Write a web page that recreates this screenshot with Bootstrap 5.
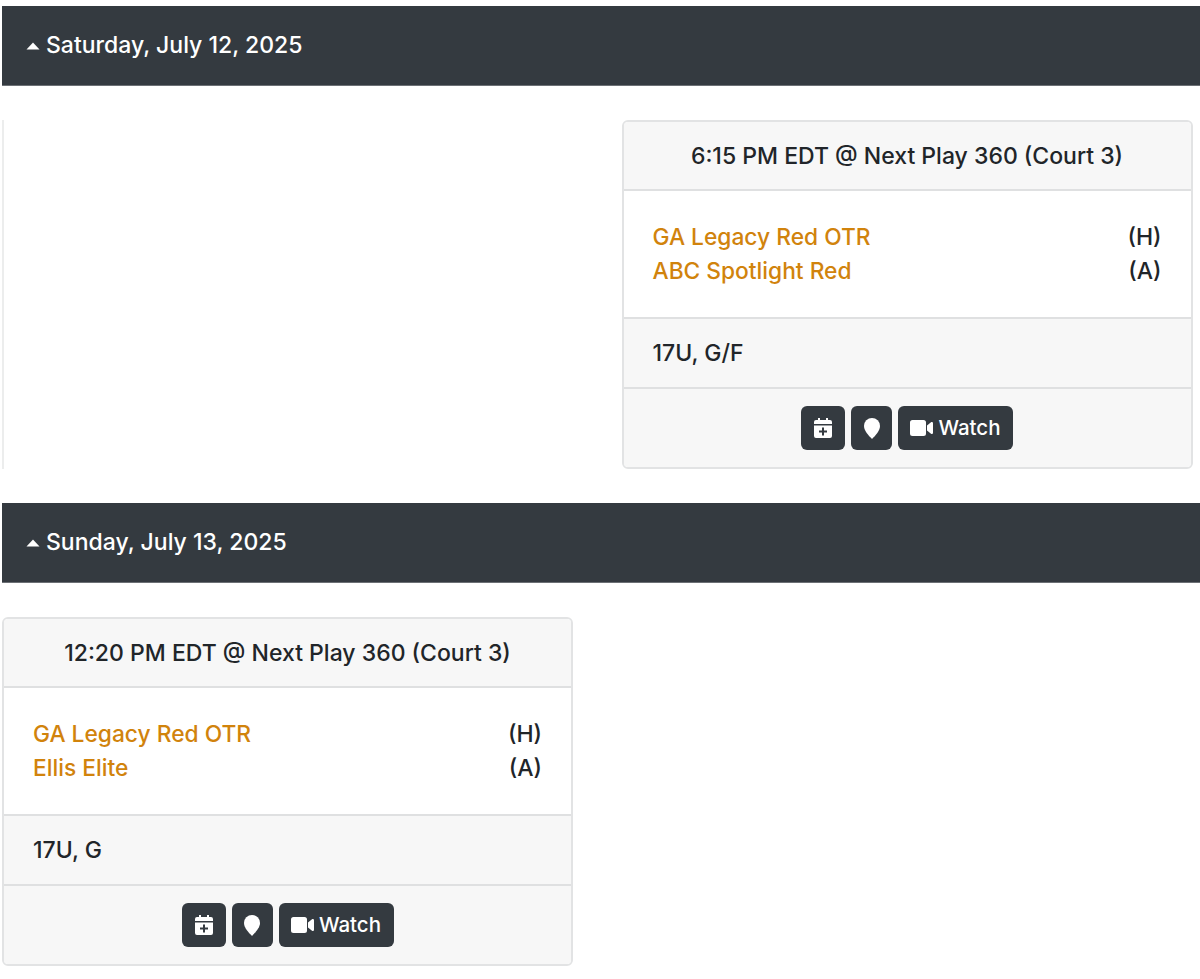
<!DOCTYPE html>
<html lang="en">
<head>
<meta charset="utf-8">
<title>Schedule</title>
<link href="https://cdn.jsdelivr.net/npm/bootstrap@5.3.0/dist/css/bootstrap.min.css" rel="stylesheet">
<style>
html,body{height:979px;overflow:hidden}
body{font-family:Inter,"Liberation Sans",sans-serif;font-size:23px;color:#212529;background:#fff;padding:6px 0 0 2px}
.day-bar{background:#343a40;color:#fff;height:79.5px;padding:0.5px 0 0 24px;font-size:23px;font-weight:500;border-bottom:1px solid #6c7075}
.day-bar svg{width:14px;height:8px;margin-right:6px;fill:#fff}
.day-grid{display:grid;grid-template-columns:571px 571px;column-gap:48.5px;padding:34.75px 0 33.75px 0}
.empty-cell{border-left:2px solid #eceded}
.game-card{border:2px solid #e2e3e4;border-radius:6px;font-size:23px;height:349px;background:#fff;overflow:hidden}
.game-head,.game-meta,.game-actions{background:#f7f7f7}
.game-head{height:69px;text-align:center;font-weight:500;border-bottom:2px solid #dfe0e1}
.game-body{height:128px;padding:0 29px;border-bottom:2px solid #dfe0e1}
.game-body a{color:#d1830c;text-decoration:none;font-weight:500;font-size:22.75px}
.game-line{height:34px;font-weight:500}
.game-meta{height:70px;padding:0 29px;font-weight:500;border-bottom:2px solid #dfe0e1}
.game-actions{flex:1;gap:6px}
.act-btn{background:#343a40;color:#fff;height:44px;border:0;border-radius:6px;font-size:20.5px;font-weight:500;padding:0;gap:5px}
.act-btn:hover{background:#343a40;color:#fff}
.act-cal{width:44px}.act-pin{width:41px}.act-watch{width:115px}
</style>
</head>
<body>
<div class="day-bar d-flex align-items-center"><svg viewBox="0 0 14 8"><path d="M7 0.5 13.5 7.5H0.5Z"/></svg>Saturday, July 12, 2025</div>
<div class="day-grid">
  <div class="empty-cell"></div>
  <div class="game-card d-flex flex-column">
    <div class="game-head d-flex align-items-center justify-content-center">6:15 PM EDT @ Next Play 360 (Court 3)</div>
    <div class="game-body d-flex flex-column justify-content-center">
      <div class="game-line d-flex justify-content-between align-items-center"><a href="#">GA Legacy Red OTR</a><span>(H)</span></div>
      <div class="game-line d-flex justify-content-between align-items-center"><a href="#">ABC Spotlight Red</a><span>(A)</span></div>
    </div>
    <div class="game-meta d-flex align-items-center">17U, G/F</div>
    <div class="game-actions d-flex align-items-center justify-content-center">
      <button class="btn act-btn act-cal d-flex align-items-center justify-content-center" type="button"><svg width="18" height="20" viewBox="0 0 18 20"><path fill="#fff" d="M4 0h2v2h6V0h2v2h2a2 2 0 0 1 2 2v2H0V4a2 2 0 0 1 2-2h2zM0 7.500h18V18a2 2 0 0 1-2 2H2a2 2 0 0 1-2-2z"/><path fill="#343a40" d="M8 9.500h2V12.500h3v2h-3V17.500H8V14.500H5v-2h3z"/></svg></button>
      <button class="btn act-btn act-pin d-flex align-items-center justify-content-center" type="button"><svg width="16" height="21" viewBox="0 0 16 21"><path fill="#fff" d="M8 0a8 8 0 0 1 8 8c0 4.500-4.500 9.500-8 13-3.500-3.500-8-8.500-8-13a8 8 0 0 1 8-8z"/></svg></button>
      <button class="btn act-btn act-watch d-flex align-items-center justify-content-center" type="button"><svg width="23" height="16" viewBox="0 0 23 16"><path fill="#fff" d="M2.500 0h11A2.500 2.500 0 0 1 16 2.500v11a2.500 2.500 0 0 1-2.500 2.500h-11A2.500 2.500 0 0 1 0 13.500v-11A2.500 2.500 0 0 1 2.500 0zM17 5.500 21 2.300c.8-.6 2-.1 2 1v9.400c0 1.100-1.200 1.600-2 1L17 10.500z"/></svg>Watch</button>
    </div>
  </div>
</div>
<div class="day-bar d-flex align-items-center"><svg viewBox="0 0 14 8"><path d="M7 0.5 13.5 7.5H0.5Z"/></svg>Sunday, July 13, 2025</div>
<div class="day-grid">
  <div class="game-card d-flex flex-column">
    <div class="game-head d-flex align-items-center justify-content-center">12:20 PM EDT @ Next Play 360 (Court 3)</div>
    <div class="game-body d-flex flex-column justify-content-center">
      <div class="game-line d-flex justify-content-between align-items-center"><a href="#">GA Legacy Red OTR</a><span>(H)</span></div>
      <div class="game-line d-flex justify-content-between align-items-center"><a href="#">Ellis Elite</a><span>(A)</span></div>
    </div>
    <div class="game-meta d-flex align-items-center">17U, G</div>
    <div class="game-actions d-flex align-items-center justify-content-center">
      <button class="btn act-btn act-cal d-flex align-items-center justify-content-center" type="button"><svg width="18" height="20" viewBox="0 0 18 20"><path fill="#fff" d="M4 0h2v2h6V0h2v2h2a2 2 0 0 1 2 2v2H0V4a2 2 0 0 1 2-2h2zM0 7.500h18V18a2 2 0 0 1-2 2H2a2 2 0 0 1-2-2z"/><path fill="#343a40" d="M8 9.500h2V12.500h3v2h-3V17.500H8V14.500H5v-2h3z"/></svg></button>
      <button class="btn act-btn act-pin d-flex align-items-center justify-content-center" type="button"><svg width="16" height="21" viewBox="0 0 16 21"><path fill="#fff" d="M8 0a8 8 0 0 1 8 8c0 4.500-4.500 9.500-8 13-3.500-3.500-8-8.500-8-13a8 8 0 0 1 8-8z"/></svg></button>
      <button class="btn act-btn act-watch d-flex align-items-center justify-content-center" type="button"><svg width="23" height="16" viewBox="0 0 23 16"><path fill="#fff" d="M2.500 0h11A2.500 2.500 0 0 1 16 2.500v11a2.500 2.500 0 0 1-2.500 2.500h-11A2.500 2.500 0 0 1 0 13.500v-11A2.500 2.500 0 0 1 2.500 0zM17 5.500 21 2.300c.8-.6 2-.1 2 1v9.400c0 1.100-1.200 1.600-2 1L17 10.500z"/></svg>Watch</button>
    </div>
  </div>
  <div></div>
</div>
<script src="https://cdn.jsdelivr.net/npm/bootstrap@5.3.0/dist/js/bootstrap.bundle.min.js"></script>
</body>
</html>
